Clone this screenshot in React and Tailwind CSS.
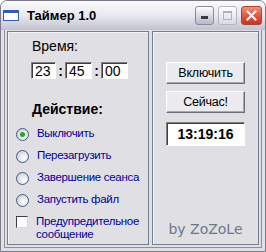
const sunken = 'border border-t-[#808080] border-l-[#808080] border-r-white border-b-white shadow-[inset_1px_1px_0_#404040] bg-white';

function TimeBox({ value, w }) {
  return (
    <div className={`${sunken} ${w} h-[17px] flex items-center pl-[3px] text-[14px] leading-none text-black`}>
      {value}
    </div>
  );
}

function Radio({ label, checked }) {
  return (
    <div className="flex items-center h-[22px]">
      <div className="w-[13px] h-[13px] ml-[8px] shrink-0 rounded-full border border-[#3e5d82] bg-[radial-gradient(circle_at_65%_65%,#ffffff_0%,#e6e6e6_45%,#c4c4cc_100%)] flex items-center justify-center">
        {checked && <div className="w-[5px] h-[5px] rounded-full bg-[#2aa52a]" />}
      </div>
      <span className="ml-[8px] whitespace-nowrap text-[11.5px] tracking-[-0.3px] text-[#00009c]">{label}</span>
    </div>
  );
}

function WinButton({ children }) {
  return (
    <div className="w-[79px] h-[22px] flex items-center justify-center text-[12.5px] tracking-[-0.2px] text-black bg-[#ececf0] border border-t-white border-l-white border-r-[#6e6e7a] border-b-[#6e6e7a] shadow-[inset_-1px_-1px_0_#a8a8b4]">
      {children}
    </div>
  );
}

export default function App() {
  return (
    <div className="w-[266px] h-[252px] flex flex-col bg-[#e0dfe3] border border-[#7b7b8b] rounded-t-[7px] overflow-hidden font-['Liberation_Sans',Arial,sans-serif]">
      <div className="h-[29px] shrink-0 flex items-center bg-linear-to-b from-[#fbfbfd] via-[#e8e8ef] to-[#c2c2d0]">
        <div className="ml-[2px] w-[16px] h-[11px] bg-white border border-[#3060b0] border-t-[3px]" />
        <span className="ml-[8px] text-[13px] font-bold text-black">Таймер 1.0</span>
        <div className="ml-auto mr-[3px] flex items-center gap-[4px]">
          <div className="w-[19px] h-[19px] rounded-[3px] border border-[#8a8a9c] bg-linear-to-b from-[#ffffff] to-[#b8b8c8] flex items-end pl-[5px] pb-[5px]">
            <div className="w-[7px] h-[3px] bg-[#3a3a48]" />
          </div>
          <div className="w-[19px] h-[19px] rounded-[3px] border border-[#b4b4c4] bg-linear-to-b from-[#ffffff] to-[#dadae4] flex items-center justify-center">
            <div className="w-[9px] h-[9px] border border-[#b0b0c0] border-t-2" />
          </div>
          <div className="w-[21px] h-[19px] rounded-[3px] border border-[#b04030] bg-linear-to-b from-[#f09080] via-[#e05840] to-[#c03828] flex items-center justify-center">
            <svg width="11" height="11" viewBox="0 0 11 11">
              <path d="M1.5 1.5 L9.5 9.5 M9.5 1.5 L1.5 9.5" stroke="#ffffff" strokeWidth="2" strokeLinecap="square" />
            </svg>
          </div>
        </div>
      </div>

      <div className="flex-1 mx-[3px] mb-[3px] border-x border-b border-[#8e8e9e] px-[2px] pt-[1px] pb-[2px] flex gap-[3px]">
        <div className="w-[142px] h-[214px] border border-[#6f808f] shadow-[inset_1px_1px_0_#f4f4f8] pt-[6px]">
          <div className="pl-[24px] text-[14px] leading-[16px] text-black">Время:</div>
          <div className="mt-[8px] ml-[23px] flex items-center">
            <TimeBox value="23" w="w-[25px]" />
            <span className="w-[9px] text-center text-[14px] font-bold leading-none">:</span>
            <TimeBox value="45" w="w-[27px]" />
            <span className="w-[9px] text-center text-[14px] font-bold leading-none">:</span>
            <TimeBox value="00" w="w-[27px]" />
          </div>
          <div className="mt-[22px] pl-[24px] text-[14px] leading-[16px] font-bold text-black">Действие:</div>
          <div className="mt-[6px]">
            <Radio label="Выключить" checked />
            <Radio label="Перезагрузить" />
            <Radio label="Завершение сеанса" />
            <Radio label="Запустить файл" />
          </div>
          <div className="mt-[4px] flex items-start">
            <div className="ml-[8px] mt-[1px] w-[12px] h-[12px] shrink-0 border border-t-[#404040] border-l-[#404040] border-r-[#d8d8d8] border-b-[#d8d8d8] bg-white" />
            <span className="ml-[8px] whitespace-nowrap text-[11.5px] tracking-[-0.3px] leading-[13px] text-[#00009c]">Предупредительное<br />сообщение</span>
          </div>
        </div>

        <div className="w-[107px] h-[214px] border border-[#6f808f] shadow-[inset_1px_1px_0_#f4f4f8] flex flex-col items-center pt-[30px]">
          <WinButton>Включить</WinButton>
          <div className="mt-[7px]">
            <WinButton>Сейчас!</WinButton>
          </div>
          <div className={`${sunken} mt-[9px] w-[79px] h-[24px] flex items-center justify-center text-[14px] font-bold text-black`}>
            13:19:16
          </div>
          <div className="mt-auto mb-[4px] text-[14px] text-[#6a7888] font-['DejaVu_Sans',Verdana,sans-serif]">by ZoZoLe</div>
        </div>
      </div>
    </div>
  );
}
